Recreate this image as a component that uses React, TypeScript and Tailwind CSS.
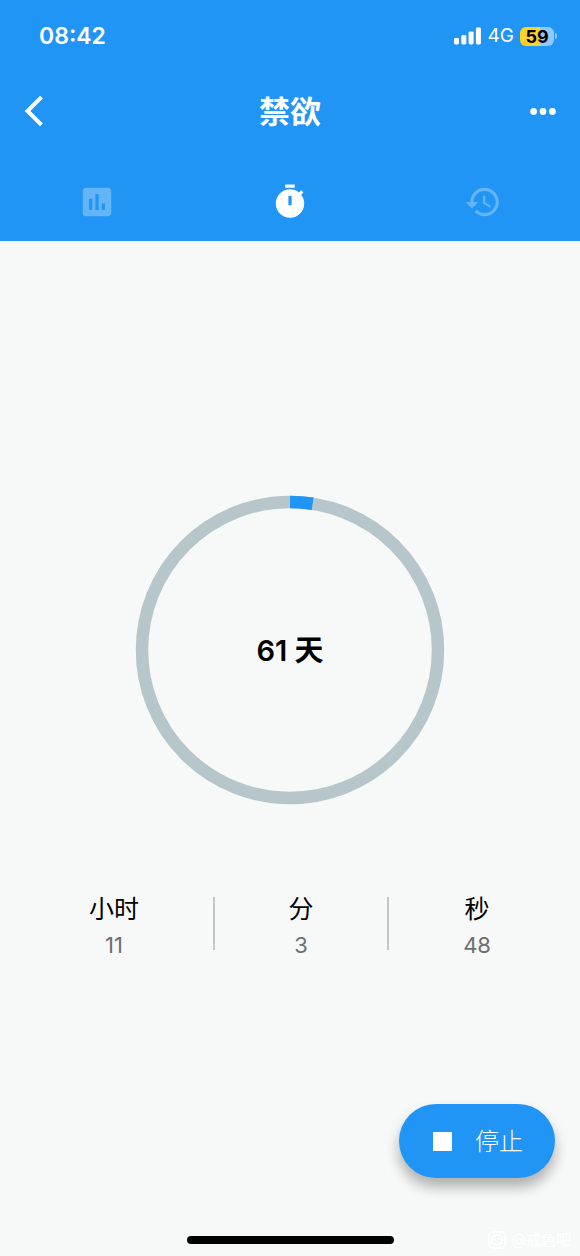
import React from "react";

const RING_RADIUS = 148;
const RING_LENGTH = 2 * Math.PI * RING_RADIUS;

function StatusBar() {
  return (
    <div className="flex h-[72px] items-center justify-between pl-[39px] pr-[23px]">
      <span className="text-[23px] leading-7 font-semibold">08:42</span>
      <div className="flex items-center">
        <svg width="27" height="18" viewBox="0 0 27 18" fill="currentColor" aria-hidden="true">
          <rect x="0" y="11" width="5" height="6.4" rx="1.4" />
          <rect x="7.3" y="8" width="5" height="9.4" rx="1.4" />
          <rect x="14.6" y="4.4" width="5" height="13" rx="1.4" />
          <rect x="21.9" y="0.5" width="5" height="16.9" rx="1.4" />
        </svg>
        <span className="ml-[7px] text-[19px] leading-7">4G</span>
        <span className="ml-[6px] flex h-[19px] w-[34px] items-center justify-center rounded-md bg-linear-to-r from-[#fdd329] from-60% to-[#93c9fa] to-60% text-[18px] leading-[19px] font-bold text-black">
          59
        </span>
        <span className="ml-px h-[6px] w-[2px] rounded-r-full bg-[#93c9fa]" />
      </div>
    </div>
  );
}

function TitleBar() {
  return (
    <div className="grid h-[78px] grid-cols-[1fr_auto_1fr] items-center px-[22px]">
      <button type="button" aria-label="返回" className="justify-self-start">
        <svg width="24" height="32" viewBox="0 0 24 32" fill="none" stroke="currentColor" strokeWidth="4" aria-hidden="true">
          <path d="M19.5 2.2 5.5 16l14 13.8" />
        </svg>
      </button>
      <h1 className="pt-[2px] text-[31px] leading-10 font-bold">禁欲</h1>
      <button type="button" aria-label="更多" className="justify-self-end">
        <svg width="28" height="24" viewBox="0 0 28 24" fill="currentColor" aria-hidden="true">
          <circle cx="3.6" cy="12.5" r="3.4" />
          <circle cx="13" cy="12.5" r="3.4" />
          <circle cx="22.4" cy="12.5" r="3.4" />
        </svg>
      </button>
    </div>
  );
}

function Tabs() {
  return (
    <nav className="grid h-[91px] grid-cols-3 items-center pt-[13px]">
      <button type="button" aria-label="统计" className="flex justify-center text-[#64b5f8]">
        <svg width="38" height="38" viewBox="0 0 24 24" fill="currentColor" aria-hidden="true">
          <path d="M19 3H5c-1.1 0-2 .9-2 2v14c0 1.1.9 2 2 2h14c1.1 0 2-.9 2-2V5c0-1.1-.9-2-2-2zM9 17H7v-7h2v7zm4 0h-2V7h2v10zm4 0h-2v-4h2v4z" />
        </svg>
      </button>
      <button type="button" aria-label="计时" className="flex justify-center">
        <svg width="38" height="38" viewBox="0 0 24 24" fill="currentColor" fillRule="evenodd" aria-hidden="true">
          <path d="M15 1H9v2h6V1zm-4 13h2V8h-2v6zm8.03-6.61 1.42-1.42c-.43-.51-.9-.99-1.41-1.41l-1.42 1.42C16.07 4.74 14.12 4 12 4c-4.97 0-9 4.03-9 9s4.02 9 9 9 9-4.03 9-9c0-2.12-.74-4.07-1.97-5.61z" />
        </svg>
      </button>
      <button type="button" aria-label="历史" className="flex justify-center text-[#64b5f8]">
        <svg width="38" height="38" viewBox="0 0 24 24" fill="currentColor" aria-hidden="true">
          <path d="M13 3c-4.97 0-9 4.03-9 9H1l3.89 3.89.07.14L9 12H6c0-3.87 3.13-7 7-7s7 3.13 7 7-3.13 7-7 7c-1.93 0-3.68-.79-4.94-2.06l-1.42 1.42C8.27 19.99 10.51 21 13 21c4.97 0 9-4.03 9-9s-4.03-9-9-9zm-1 5v5l4.28 2.54.72-1.21-3.5-2.08V8H12z" />
        </svg>
      </button>
    </nav>
  );
}

function ProgressRing({ share, label }: { share: number; label: string }) {
  return (
    <div className="relative flex size-[310px] items-center justify-center">
      <svg className="absolute inset-0" width="310" height="310" viewBox="0 0 310 310" fill="none" strokeWidth="12.5" aria-hidden="true">
        <circle cx="155" cy="155" r={RING_RADIUS} stroke="#b7c6cb" />
        <circle
          cx="155"
          cy="155"
          r={RING_RADIUS}
          stroke="#2095f5"
          strokeDasharray={`${RING_LENGTH * share} ${RING_LENGTH}`}
          transform="rotate(-90 155 155)"
        />
      </svg>
      <p className="pt-[2px] text-[29px] leading-9 font-semibold text-black">{label}</p>
    </div>
  );
}

function Stat({ label, value }: { label: string; value: number }) {
  return (
    <div className="flex flex-col items-center">
      <dt className="text-[25px] leading-10 text-black">{label}</dt>
      <dd className="text-[22px] leading-8 text-[#6d6f70]">{value}</dd>
    </div>
  );
}

export default function App() {
  return (
    <div className="flex min-h-screen flex-col bg-[#f7f9f9] font-['Inter','Noto_Sans_CJK_SC',sans-serif]">
      <header className="bg-[#2095f5] text-white">
        <StatusBar />
        <TitleBar />
        <Tabs />
      </header>

      <main className="flex flex-1 flex-col items-center pt-[254px]">
        <ProgressRing share={0.0245} label="61 天" />
        <dl className="mt-[84px] flex w-full items-start justify-between px-[89px]">
          <Stat label="小时" value={11} />
          <div className="mt-2 h-[53px] w-[2px] bg-[#c5c7c7]" />
          <Stat label="分" value={3} />
          <div className="mt-2 h-[53px] w-[2px] bg-[#c5c7c7]" />
          <Stat label="秒" value={48} />
        </dl>
      </main>

      <div className="flex justify-end pr-[25px]">
        <button
          type="button"
          className="flex h-[74px] items-center gap-[23px] rounded-full bg-[#2095f5] pr-[32px] pl-[34px] text-[24px] leading-8 font-light text-white shadow-[0_9px_14px_rgba(0,0,0,0.3)]"
        >
          <span className="size-[19px] bg-white" />
          <span className="pt-[2px]">停止</span>
        </button>
      </div>

      <footer className="relative flex h-[78px] flex-col items-center justify-end pb-3">
        <div className="h-2 w-[207px] rounded-full bg-black" />
        <div className="absolute right-[9px] bottom-1 flex items-center gap-[6px] text-white">
          <svg width="18" height="18" viewBox="0 0 18 18" fill="none" stroke="currentColor" strokeWidth="2" aria-hidden="true">
            <rect x="1" y="1" width="16" height="16" rx="4" />
            <circle cx="9" cy="9" r="5" />
            <path d="M7 7v2M11 7v2" strokeWidth="1.5" />
          </svg>
          <span className="text-[15px] leading-6">@戒色吧</span>
        </div>
      </footer>
    </div>
  );
}
